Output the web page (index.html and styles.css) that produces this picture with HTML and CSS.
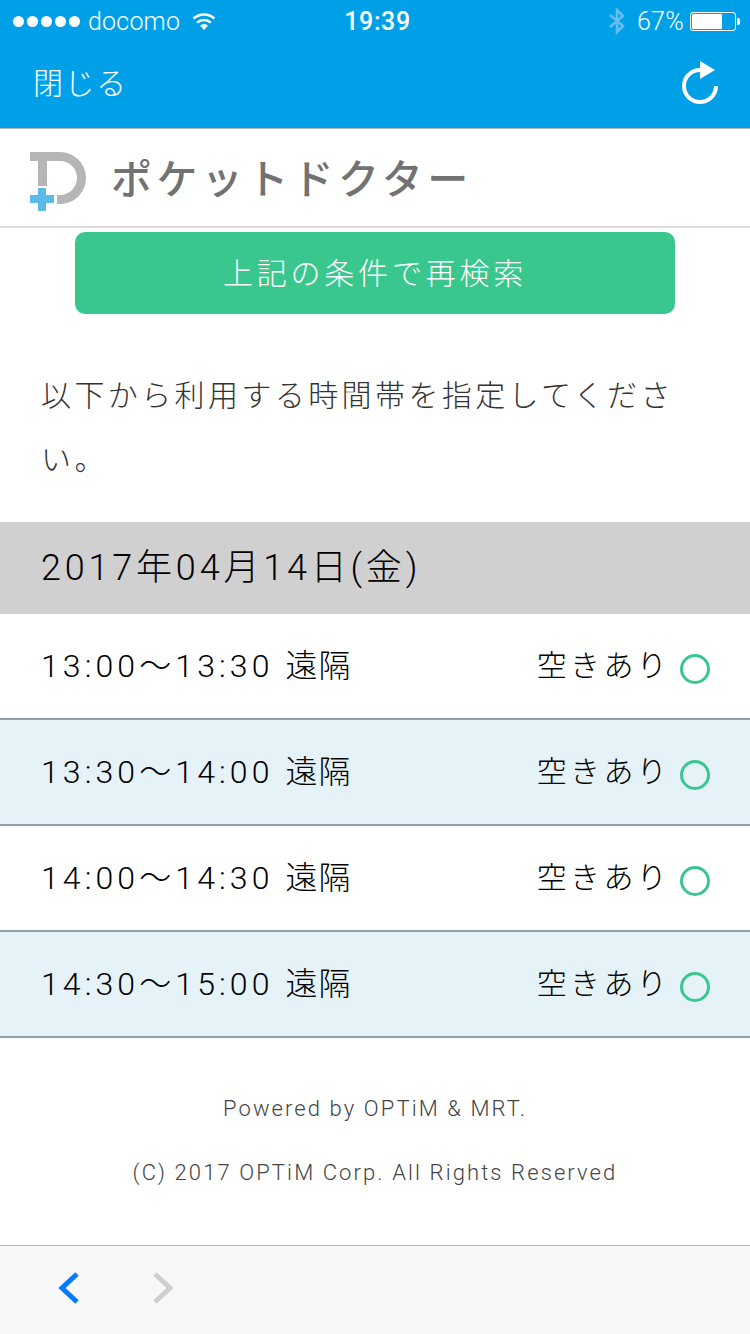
FILE: index.html
```html
<!DOCTYPE html>
<html lang="ja">
<head>
<meta charset="utf-8">
<title>ポケットドクター</title>
<link rel="stylesheet" href="styles.css">
</head>
<body>
<div class="page">
  <header class="top">
    <div class="status">
      <div class="status-left">
        <span class="dots"><i></i><i></i><i></i><i></i><i></i></span>
        <span class="carrier">docomo</span>
        <svg class="wifi" width="26" height="20" viewBox="0 0 26 20"><path d="M13 19 9 14.600a6 6 0 0 1 8 0z" fill="#fff"/><path d="M6.200 11.600a10 10 0 0 1 13.600 0M2.600 7.600a15.400 15.400 0 0 1 20.800 0" fill="none" stroke="#fff" stroke-width="2.600"/></svg>
      </div>
      <div class="clock">19:39</div>
      <div class="status-right">
        <svg class="bt" width="20" height="28" viewBox="0 0 20 28"><path d="M3 8 16 19 10 25V3L16 9 3 20" fill="none" stroke="#66bdee" stroke-width="2.600"/></svg>
        <span class="pct">67%</span>
        <span class="battery"><span class="level"></span></span><span class="nub"></span>
      </div>
    </div>
    <nav class="nav">
      <span class="close">閉じる</span>
      <svg class="reload" width="40" height="46" viewBox="0 0 40 46"><path d="M36 26A16 16 0 1 1 20 10" fill="none" stroke="#fff" stroke-width="4"/><path d="M20 1 35 10 20 19z" fill="#fff"/></svg>
    </nav>
  </header>

  <div class="brand">
    <svg class="logo" width="56" height="59" viewBox="0 0 56 59">
      <path d="M0 0H30a26 26 0 0 1 0 52H27V43H30a17 17 0 0 0 0-34H17V34H8V9H0z" fill="#b6b6b6"/>
      <path d="M8 36H16V43H24V51H16V59H8V51H0V43H8z" fill="#5bbce8"/>
    </svg>
    <span class="brand-name">ポケットドクター</span>
  </div>

  <main class="content">
    <div class="search-wrap"><button class="search">上記の条件で再検索</button></div>
    <p class="lead">以下から利用する時間帯を指定してください。</p>
    <h2 class="date">2017年04月14日(金)</h2>
    <ul class="slots">
      <li class="slot"><span>13:00～13:30 <span class="kind">遠隔</span></span><span class="avail">空きあり<i class="ring"></i></span></li>
      <li class="slot alt"><span>13:30～14:00 <span class="kind">遠隔</span></span><span class="avail">空きあり<i class="ring"></i></span></li>
      <li class="slot"><span>14:00～14:30 <span class="kind">遠隔</span></span><span class="avail">空きあり<i class="ring"></i></span></li>
      <li class="slot alt"><span>14:30～15:00 <span class="kind">遠隔</span></span><span class="avail">空きあり<i class="ring"></i></span></li>
    </ul>
    <footer class="foot">
      <p>Powered by OPTiM &amp; MRT.</p>
      <p>(C) 2017 OPTiM Corp. All Rights Reserved</p>
    </footer>
  </main>

  <div class="toolbar">
    <svg class="chev" width="24" height="34" viewBox="0 0 24 34"><path d="M21 3 6 17 21 31" fill="none" stroke="#007aff" stroke-width="5"/></svg>
    <svg class="chev" width="24" height="34" viewBox="0 0 24 34"><path d="M3 3 18 17 3 31" fill="none" stroke="#cfcfcf" stroke-width="5"/></svg>
  </div>
</div>
</body>
</html>
```
FILE: styles.css
```css
* { box-sizing: border-box; }
html, body { margin: 0; padding: 0; }
body { font-family: Roboto, "Noto Sans CJK JP", sans-serif; background: #fff; color: #222; }
.page { width: 750px; height: 1334px; display: flex; flex-direction: column; overflow: hidden; }
.top { background: #00a0e9; color: #fff; height: 129px; border-bottom: 1px solid #b5b5b5; }
.status { height: 42px; display: flex; align-items: center; justify-content: space-between; padding: 0 10px 0 13px; position: relative; font-size: 25px; font-weight: 300; }
.status-left, .status-right { display: flex; align-items: center; }
.dots { display: flex; gap: 3px; margin-right: 8px; }
.dots i { width: 11px; height: 11px; border-radius: 50%; background: #fff; }
.carrier { margin-right: 11px; letter-spacing: 0.2px; }
.clock { position: absolute; left: 0; right: 0; text-align: center; font-weight: 500; font-size: 25px; letter-spacing: 0.6px; padding-left: 5px; }
.bt { margin-right: 10px; }
.pct { margin-right: 6px; letter-spacing: 0.3px; }
.battery { width: 46px; height: 19px; border: 1px solid #fff; border-radius: 3px; padding: 1px; display: flex; }
.level { width: 30px; background: #fff; border-radius: 1px; }
.nub { width: 3px; height: 7px; background: #fff; margin-left: 1px; border-radius: 0 2px 2px 0; }
.nav { height: 86px; display: flex; align-items: center; justify-content: space-between; padding: 0 30px 4px 33px; }
.close { font-size: 30px; font-weight: 300; letter-spacing: 1.5px; margin-bottom: 4px; }
.brand { height: 99px; display: flex; align-items: center; padding-left: 30px; gap: 25px; border-bottom: 2px solid #dedede; flex: none; }
.logo { margin-top: 8px; }
.brand-name { font-family: "Noto Sans CJK JP", sans-serif; font-size: 41px; font-weight: 500; color: #727272; letter-spacing: 4.4px; margin-bottom: 4px; }
.content { flex: 1; }
.search-wrap { padding: 4px 75px 0; }
.search { width: 600px; height: 82px; border: 0; padding: 0 0 4px; background: #3ac78e; color: #fff; border-radius: 10px; font: 300 30px "Noto Sans CJK JP", sans-serif; letter-spacing: 3.8px; display: block; }
.lead { margin: 50px 0 30px; padding: 0 41px; font-size: 30px; font-weight: 300; line-height: 64px; letter-spacing: 3.4px; color: #333; }
.date { margin: 0; height: 92px; background: #d0d0d0; padding: 0 0 8px 41px; display: flex; align-items: center; font-size: 36px; font-weight: 300; letter-spacing: 3.8px; color: #000; }
.slots { list-style: none; margin: 0; padding: 0; }
.slot { height: 106px; border-bottom: 2px solid #8aa0ad; display: flex; align-items: center; justify-content: space-between; padding: 0 40px 6px 41px; font-size: 32px; font-weight: 300; letter-spacing: 4.1px; color: #000; }
.kind { letter-spacing: 1px; }
.alt { background: #e5f2f8; }
.avail { display: flex; align-items: center; font-size: 30px; letter-spacing: 3.3px; }
.ring { width: 30px; height: 30px; border: 3px solid #3ac78e; border-radius: 50%; margin: 12px 0 0 10px; }
.foot { padding-top: 55px; text-align: center; font-size: 22px; font-weight: 300; letter-spacing: 2.1px; color: #444; }
.foot p { margin: 0 0 32px; line-height: 32px; }
.toolbar { height: 89px; flex: none; background: #f8f8f8; border-top: 1px solid #b4b4b4; display: flex; align-items: center; gap: 72px; padding: 0 0 4px 56px; }
```
